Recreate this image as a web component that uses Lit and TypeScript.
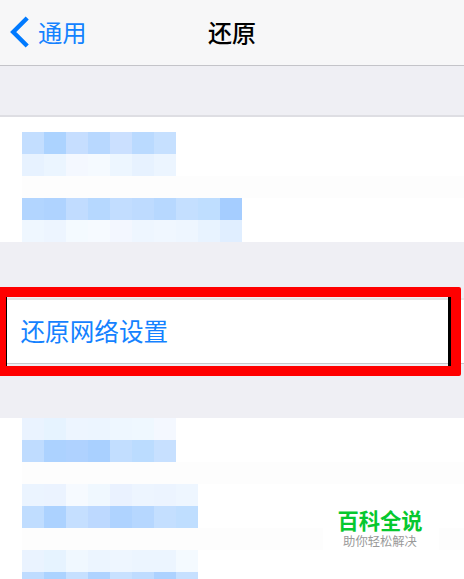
import { LitElement, html, css } from 'lit';
import { customElement, property } from 'lit/decorators.js';

@customElement('mosaic-row')
export class MosaicRow extends LitElement {
  @property({ type: Array }) colors: string[] = [];

  static styles = css`
    :host {
      display: flex;
      height: 22px;
      padding-left: 22px;
    }

    .cell {
      width: 22px;
      height: 22px;
    }
  `;

  render() {
    return html`${this.colors.map(
      (color) => html`<div class="cell" style="background:${color}"></div>`
    )}`;
  }
}

@customElement('app-root')
export class AppRoot extends LitElement {
  static styles = css`
    :host {
      display: flex;
      flex-direction: column;
      position: relative;
      box-sizing: border-box;
      width: 464px;
      height: 579px;
      overflow: hidden;
      background: #efeff4;
      font-family: 'Noto Sans CJK SC', sans-serif;
    }

    .header {
      display: grid;
      grid-template-columns: 1fr 50px 1fr;
      align-items: center;
      box-sizing: border-box;
      flex: none;
      height: 66px;
      padding-bottom: 1px;
      background: #f7f7f8;
      border-bottom: 1px solid #c4c4c9;
    }

    .back {
      display: flex;
      align-items: center;
      gap: 8px;
      padding-left: 10px;
      color: #1482ff;
      font-size: 24.3px;
      line-height: 36px;
    }

    .back svg {
      display: block;
    }

    .title {
      color: #000;
      font-size: 24px;
      font-weight: 500;
      line-height: 36px;
      text-align: center;
      white-space: nowrap;
    }

    .group {
      box-sizing: border-box;
      flex: none;
      background: #fff;
    }

    .first {
      height: 127px;
      margin-top: 49px;
      padding-top: 15px;
      border-top: 2px solid #dedee3;
    }

    .network {
      display: flex;
      align-items: center;
      height: 66px;
      margin-top: 56px;
      padding-bottom: 4px;
      padding-left: 20.5px;
      border-top: 2px solid #e4e4e6;
      border-bottom: 1px solid #c8c8cc;
      color: #1482ff;
      font-size: 24.6px;
      line-height: 36px;
    }

    .last {
      height: 161px;
      margin-top: 54px;
    }

    .strip {
      height: 22px;
      margin-left: 22px;
      background: #fdfdfd;
    }

    .frame {
      position: absolute;
      top: 287px;
      left: 0;
      box-sizing: border-box;
      width: 461px;
      height: 89px;
      border: 10px solid #f00;
      border-left-width: 6px;
      border-radius: 0 2px 2px 0;
    }

    .edge {
      box-sizing: border-box;
      height: 100%;
      border-left: 1px solid #000;
      border-right: 3px solid #000;
    }

    .watermark {
      position: absolute;
      top: 506px;
      left: 323px;
      display: flex;
      flex-direction: column;
      align-items: center;
      box-sizing: border-box;
      width: 116px;
      height: 50px;
      padding-top: 2px;
      background: #fff;
      font-family: 'Liberation Sans', 'Noto Sans CJK SC', sans-serif;
      white-space: nowrap;
    }

    .brand {
      height: 27px;
      padding-right: 2px;
      color: #06c82f;
      font-size: 21.3px;
      font-weight: 700;
      line-height: 28px;
    }

    .slogan {
      height: 14px;
      padding-right: 2px;
      color: #999;
      font-size: 12.3px;
      line-height: 14px;
    }
  `;

  render() {
    return html`
      <div class="header">
        <div class="back">
          <svg width="20" height="32" viewBox="0 0 20 32">
            <path d="M17.2 2 3.2 16 17.2 30" fill="none" stroke="#007aff" stroke-width="4.4" />
          </svg>
          <span>通用</span>
        </div>
        <div class="title">还原</div>
      </div>

      <div class="group first">
        <mosaic-row .colors=${['#c3deff', '#acd3ff', '#c6deff', '#b8d8ff', '#cbe0ff', '#badaff', '#c6e0ff']}></mosaic-row>
        <mosaic-row .colors=${['#e7f2ff', '#ebf5ff', '#f4f8ff', '#f5faff', '#edf6ff', '#e7f2ff', '#ecf5ff']}></mosaic-row>
        <div class="strip"></div>
        <mosaic-row .colors=${['#b2d5ff', '#afd3ff', '#c1dcff', '#b6d8ff', '#c2ddff', '#bedbff', '#b7d8ff', '#c4dfff', '#bfdeff', '#a5cdff']}></mosaic-row>
        <mosaic-row .colors=${['#eff7ff', '#edf5ff', '#f4faff', '#f6faff', '#f3f7ff', '#eef6ff', '#f0f7ff', '#eef6ff', '#e8f3ff', '#e0eeff']}></mosaic-row>
      </div>

      <div class="group network">还原网络设置</div>

      <div class="group last">
        <mosaic-row .colors=${['#eaf3ff', '#e6f3ff', '#edf5ff', '#ecf5ff', '#eef7ff', '#eff8ff', '#f4f8ff']}></mosaic-row>
        <mosaic-row .colors=${['#bfdcff', '#acd2ff', '#afd2ff', '#a9d0ff', '#c2deff', '#bbdcff', '#c7e0ff']}></mosaic-row>
        <div class="strip"></div>
        <mosaic-row .colors=${['#ebf4ff', '#ebf3ff', '#f6faff', '#f0f8ff', '#eaf2ff', '#edf5ff', '#ecf4ff', '#eef6ff']}></mosaic-row>
        <mosaic-row .colors=${['#c0ddff', '#acd2ff', '#c5dfff', '#bdd9ff', '#afd3ff', '#b6d7ff', '#c4dfff', '#bfdeff']}></mosaic-row>
        <div class="strip"></div>
        <mosaic-row .colors=${['#eaf3ff', '#e6f3ff', '#f0f8ff', '#ecf5ff', '#eef6ff', '#ecf5ff', '#ecf5ff', '#f4faff']}></mosaic-row>
        <mosaic-row .colors=${['#bfdcff', '#acd3ff', '#c6e0ff', '#afd3ff', '#c8e1ff', '#bfdcff', '#add2ff', '#c6e0ff']}></mosaic-row>
      </div>

      <div class="frame"><div class="edge"></div></div>

      <div class="watermark">
        <div class="brand">百科全说</div>
        <div class="slogan">助你轻松解决</div>
      </div>
    `;
  }
}
